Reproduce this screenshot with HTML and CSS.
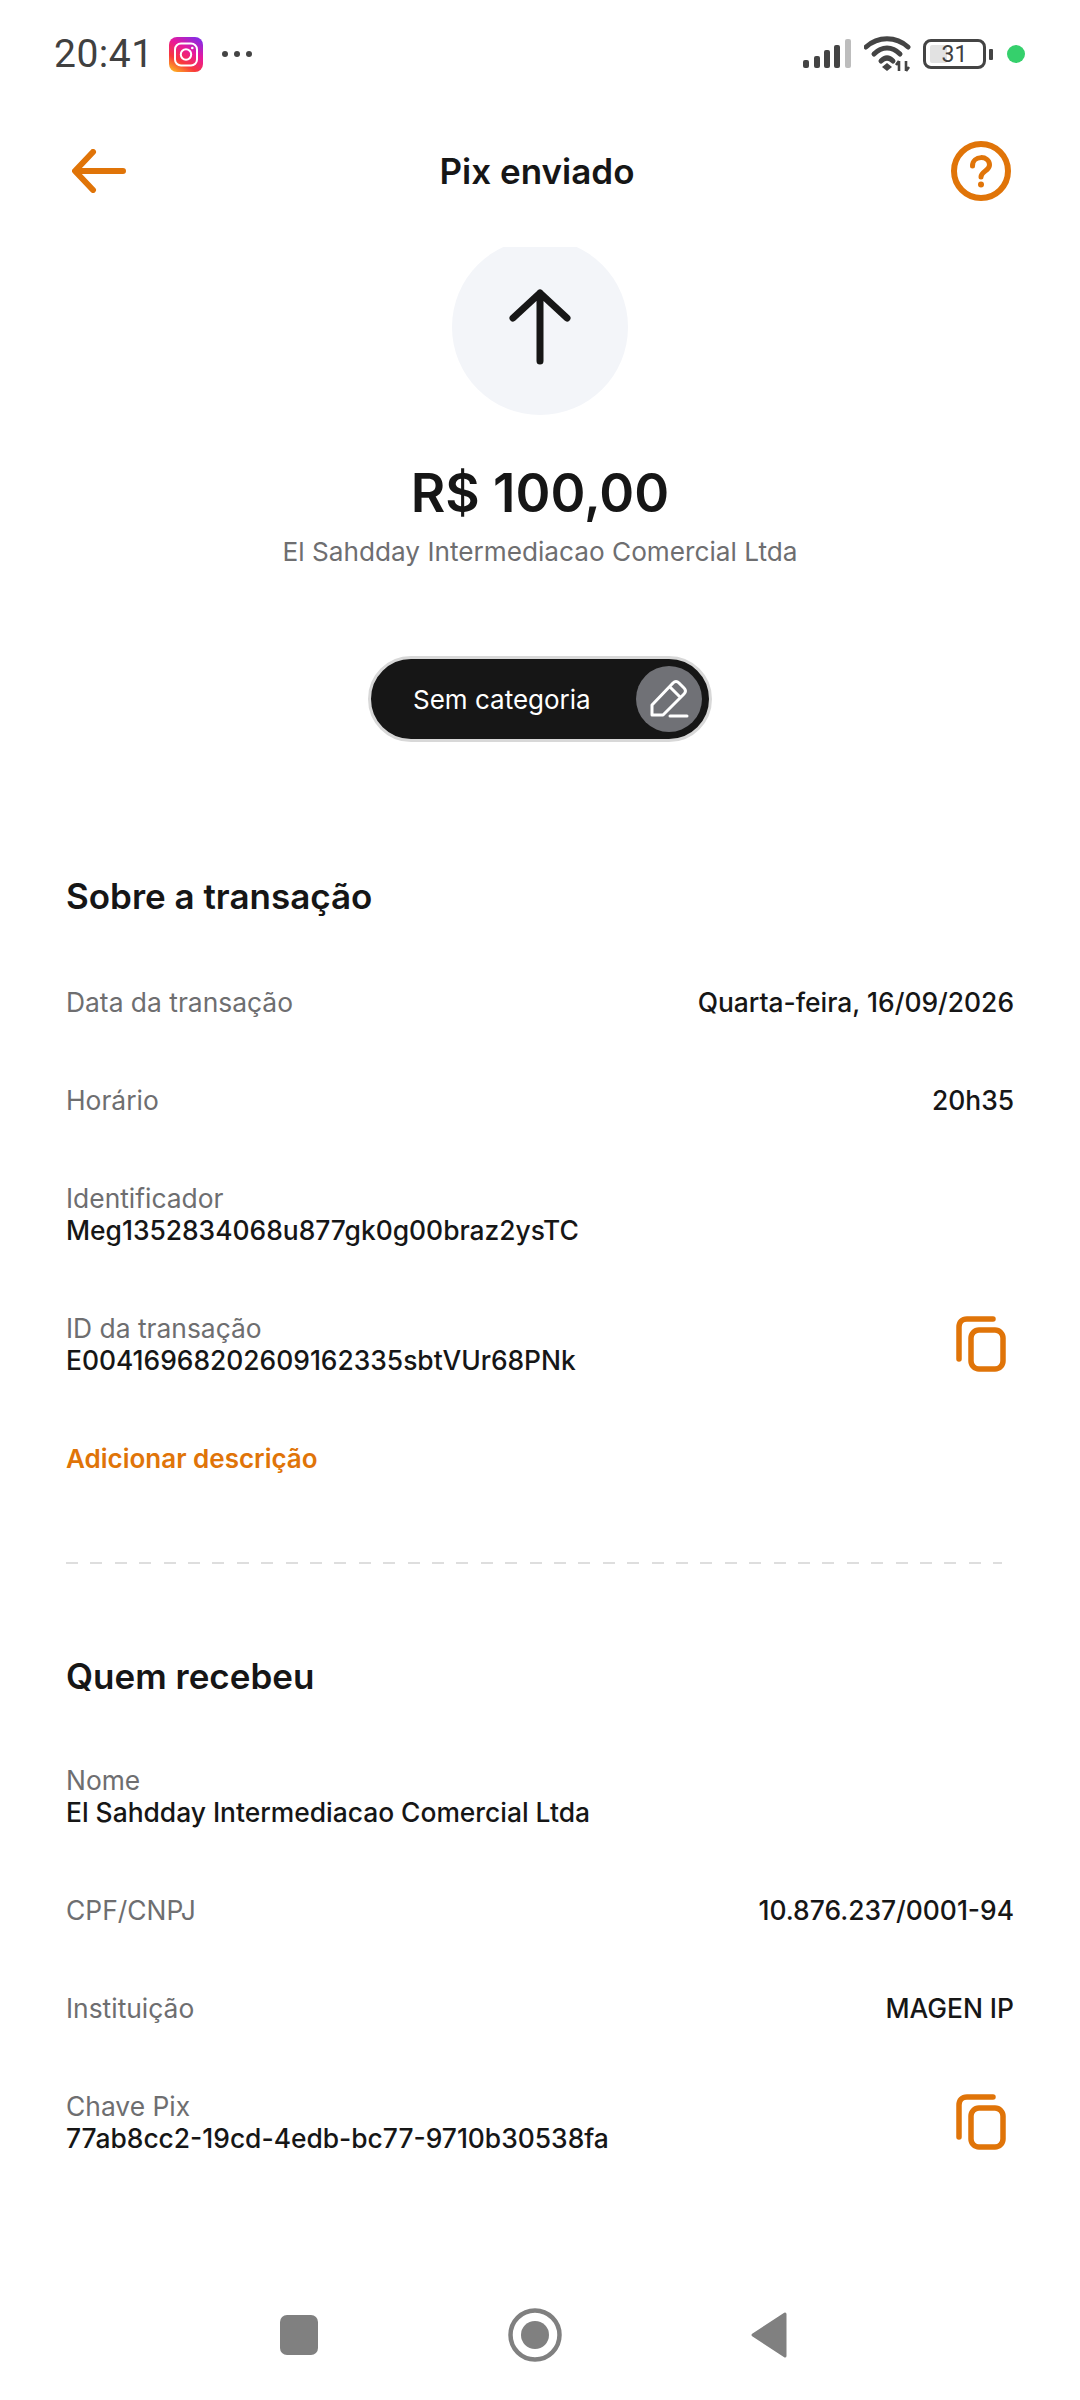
FILE: index.html
```html
<!DOCTYPE html>
<html lang="pt-BR">
<head>
  <meta charset="UTF-8" />
  <title>Pix enviado</title>
  <link rel="stylesheet" href="styles.css">
</head>
<body>
<div class="screen">

  <div class="status-bar">
    <span class="clock">20:41</span>
    <svg class="ig-icon" width="34" height="35" viewBox="0 0 34 35">
      <defs>
        <linearGradient id="igGrad" x1="0.15" y1="1" x2="0.75" y2="0">
          <stop offset="0" stop-color="#fdb022" />
          <stop offset="0.3" stop-color="#f8383c" />
          <stop offset="0.65" stop-color="#e8189c" />
          <stop offset="1" stop-color="#8a2be2" />
        </linearGradient>
      </defs>
      <rect width="34" height="35" rx="8" fill="url(#igGrad)" />
      <rect x="6" y="6.5" width="22" height="22" rx="6" fill="none" stroke="#fff" stroke-width="2" />
      <circle cx="17" cy="17.5" r="5.2" fill="none" stroke="#fff" stroke-width="2" />
      <circle cx="23.3" cy="11" r="1.3" fill="#fff" />
    </svg>
    <span class="more-dots"><i></i><i></i><i></i></span>
    <span class="status-right">
      <svg width="48" height="30" viewBox="0 0 48 30">
        <rect x="0" y="21" width="6" height="8" rx="2" fill="#444" />
        <rect x="11" y="17" width="6" height="12" rx="2" fill="#444" />
        <rect x="21" y="11" width="6" height="18" rx="2" fill="#444" />
        <rect x="31" y="6" width="6" height="23" rx="2" fill="#444" />
        <rect x="42" y="0" width="6" height="29" rx="2" fill="#bdbdbd" />
      </svg>
      <svg width="48" height="36" viewBox="0 0 48 36">
        <path d="M2 11 C14 0 32 0 44 11" fill="none" stroke="#444" stroke-width="5" stroke-linecap="round" />
        <path d="M10 18 C18 10 28 10 36 18" fill="none" stroke="#444" stroke-width="5" stroke-linecap="round" />
        <path d="M17 25 C21 21 25 21 29 25" fill="none" stroke="#444" stroke-width="5" stroke-linecap="round" />
        <path d="M18 31 L23 27 L28 31 L23 35 Z" fill="#444" />
        <path d="M35 25 V35 M35 25 L32 29 M42 35 V25 M42 35 L45 31" fill="none" stroke="#444" stroke-width="2.6" />
      </svg>
      <span class="battery">
        <span class="battery-fill"></span>
        <span class="battery-level">31</span>
      </span>
      <span class="battery-cap"></span>
      <span class="green-dot"></span>
    </span>
  </div>

  <header class="top-bar">
    <svg class="back-icon" width="54" height="44" viewBox="0 0 54 44">
      <path d="M51 22 H4 M21 3 L3 22 L21 41" fill="none" stroke="#e07408" stroke-width="6" stroke-linecap="round" stroke-linejoin="round" />
    </svg>
    <h1>Pix enviado</h1>
    <svg class="help-icon" width="62" height="62" viewBox="0 0 62 62">
      <circle cx="31" cy="31" r="27" fill="none" stroke="#e07408" stroke-width="6" />
      <path d="M22.5 26 C22.5 15 39.5 15 39.5 25 C39.5 31 31 31 31 37" fill="none" stroke="#e07408" stroke-width="5" stroke-linecap="round" />
      <circle cx="31" cy="44.5" r="3" fill="#e07408" />
    </svg>
  </header>

  <section class="summary">
    <div class="circle-clip">
      <div class="circle">
        <svg width="62" height="76" viewBox="0 0 62 76">
          <path d="M31 72 V4 M4 29 L31 4 L58 29" fill="none" stroke="#161616" stroke-width="7" stroke-linecap="round" stroke-linejoin="round" />
        </svg>
      </div>
    </div>
    <div class="amount">R$ 100,00</div>
    <div class="payee">El Sahdday Intermediacao Comercial Ltda</div>
    <div class="category-pill">
      <span>Sem categoria</span>
      <span class="edit-btn">
        <svg width="40" height="40" viewBox="0 0 40 40">
          <path d="M3 36 V26 L24 4 C26 2 28 2 30 4 L35 9 C37 11 37 13 35 15 L14 36 Z M21 8 L31 18" fill="none" stroke="#fff" stroke-width="3" stroke-linejoin="round" />
          <path d="M21 37 H38" fill="none" stroke="#fff" stroke-width="3" stroke-linecap="round" />
        </svg>
      </span>
    </div>
  </section>

  <section class="details">
    <h2>Sobre a transação</h2>
    <div class="rows">
      <div class="row">
        <span class="label">Data da transação</span>
        <span class="value">Quarta-feira, 16/09/2026</span>
      </div>
      <div class="row">
        <span class="label">Horário</span>
        <span class="value">20h35</span>
      </div>
      <div class="row">
        <div class="stack">
          <span class="label">Identificador</span>
          <span class="value">Meg1352834068u877gk0g00braz2ysTC</span>
        </div>
      </div>
      <div class="row">
        <div class="stack">
          <span class="label">ID da transação</span>
          <span class="value">E00416968202609162335sbtVUr68PNk</span>
        </div>
        <svg class="copy-icon" width="50" height="56" viewBox="0 0 50 56">
          <path d="M3 43 V11 C3 6 6 3 11 3 H37" fill="none" stroke="#e07408" stroke-width="5.5" stroke-linecap="round" />
          <rect x="15" y="14" width="32" height="39" rx="8" fill="none" stroke="#e07408" stroke-width="5.5" />
        </svg>
      </div>
      <div class="row add-row">
        <span class="add-link">Adicionar descrição</span>
      </div>
    </div>
  </section>

  <div class="dashed"></div>

  <section class="details receiver">
    <h2>Quem recebeu</h2>
    <div class="rows">
      <div class="row">
        <div class="stack">
          <span class="label">Nome</span>
          <span class="value">El Sahdday Intermediacao Comercial Ltda</span>
        </div>
      </div>
      <div class="row">
        <span class="label">CPF/CNPJ</span>
        <span class="value">10.876.237/0001-94</span>
      </div>
      <div class="row">
        <span class="label">Instituição</span>
        <span class="value">MAGEN IP</span>
      </div>
      <div class="row">
        <div class="stack">
          <span class="label">Chave Pix</span>
          <span class="value">77ab8cc2-19cd-4edb-bc77-9710b30538fa</span>
        </div>
        <svg class="copy-icon" width="50" height="56" viewBox="0 0 50 56">
          <path d="M3 43 V11 C3 6 6 3 11 3 H37" fill="none" stroke="#e07408" stroke-width="5.5" stroke-linecap="round" />
          <rect x="15" y="14" width="32" height="39" rx="8" fill="none" stroke="#e07408" stroke-width="5.5" />
        </svg>
      </div>
    </div>
  </section>

  <nav class="nav-bar">
    <span class="nav-square"></span>
    <svg width="54" height="54" viewBox="0 0 54 54">
      <circle cx="27" cy="27" r="24.5" fill="none" stroke="#808080" stroke-width="4.5" />
      <circle cx="27" cy="27" r="14" fill="#808080" />
    </svg>
    <svg width="36" height="46" viewBox="0 0 36 46">
      <path d="M34 2 V44 L2 23 Z" fill="#808080" stroke="#808080" stroke-width="3" stroke-linejoin="round" />
    </svg>
  </nav>

</div>
</body>
</html>
```

FILE: styles.css
```css
* {
  box-sizing: border-box;
}
body {
  margin: 0;
  background: #ffffff;
  font-family: 'Inter', sans-serif;
  color: #161616;
}
.screen {
  width: 1080px;
  height: 2400px;
  display: flex;
  flex-direction: column;
  overflow: hidden;
}

/* status bar */
.status-bar {
  height: 106px;
  padding: 2px 0 0 54px;
  display: flex;
  align-items: center;
}
.clock {
  font-family: 'Roboto', sans-serif;
  font-size: 39px;
  color: #404040;
  letter-spacing: 0.5px;
}
.ig-icon {
  margin-left: 15px;
}
.more-dots {
  margin-left: 19px;
  display: flex;
  gap: 6px;
}
.more-dots i {
  width: 6px;
  height: 6px;
  border-radius: 50%;
  background: #444;
}
.status-right {
  margin-left: auto;
  margin-right: 55px;
  display: flex;
  align-items: center;
}
.status-right svg + svg {
  margin-left: 13px;
}
.battery {
  margin-left: 11px;
  width: 63px;
  height: 30px;
  border: 3px solid #444;
  border-radius: 8px;
  display: flex;
  align-items: center;
  justify-content: center;
  position: relative;
}
.battery-fill {
  position: absolute;
  left: 4px;
  top: 3px;
  bottom: 3px;
  width: 17px;
  background: #e2e2e2;
  border-radius: 2px;
}
.battery-level {
  position: relative;
  font-family: 'Roboto', sans-serif;
  font-size: 23px;
  color: #404040;
}
.battery-cap {
  margin-left: 3px;
  width: 4px;
  height: 11px;
  background: #444;
  border-radius: 1px;
}
.green-dot {
  margin-left: 14px;
  width: 18px;
  height: 18px;
  border-radius: 50%;
  background: #35d06c;
}

/* top bar */
.top-bar {
  height: 130px;
  padding: 0 68px 0 72px;
  display: flex;
  align-items: center;
  justify-content: space-between;
  flex: none;
}
.top-bar h1 {
  margin: 0 2px 0 0;
  font-size: 35px;
  font-weight: 600;
}

/* summary */
.summary {
  margin-top: 11px;
  display: flex;
  flex-direction: column;
  align-items: center;
}
.circle-clip {
  height: 168px;
  width: 176px;
  overflow: hidden;
}
.circle {
  width: 176px;
  height: 176px;
  margin-top: -8px;
  border-radius: 50%;
  background: #f3f5f9;
  display: flex;
  align-items: center;
  justify-content: center;
}
.amount {
  margin-top: 46px;
  font-size: 53px;
  line-height: 64px;
  font-weight: 600;
}
.payee {
  margin-top: 11px;
  font-size: 26.2px;
  line-height: 32px;
  color: #6e6e70;
}
.category-pill {
  margin-top: 88px;
  width: 344px;
  height: 86px;
  padding: 0 7px 0 42px;
  border: 3px solid #d8d8d8;
  border-radius: 43px;
  background: #161616;
  color: #ffffff;
  font-size: 26px;
  display: flex;
  align-items: center;
  justify-content: space-between;
}
.edit-btn {
  width: 66px;
  height: 66px;
  border-radius: 50%;
  background: #707176;
  display: flex;
  align-items: center;
  justify-content: center;
}

/* detail rows */
.details {
  padding: 0 66px;
  margin-top: 136px;
}
.details.receiver {
  margin-top: 94px;
}
.details h2 {
  margin: 0 0 72px;
  font-size: 35px;
  line-height: 36px;
  font-weight: 600;
}
.details.receiver h2 {
  margin-bottom: 70px;
}
.rows {
  display: flex;
  flex-direction: column;
  gap: 66px;
}
.row {
  display: flex;
  align-items: center;
  justify-content: space-between;
  min-height: 32px;
  font-size: 26.4px;
  line-height: 32px;
}
.add-row {
  margin-top: 1px;
}
.stack {
  display: flex;
  flex-direction: column;
}
.label {
  color: #6e6e70;
}
.value {
  font-weight: 500;
  color: #161616;
}
.add-link {
  font-size: 26px;
  font-weight: 600;
  color: #e07408;
}
.copy-icon {
  margin: -12px 8px -12px 0;
}
.dashed {
  margin: 87px 0 0 66px;
  width: 936px;
  height: 2px;
  flex: none;
  background: repeating-linear-gradient(to right, #dedede 0 12px, transparent 12px 24.4px);
}

/* android nav */
.nav-bar {
  margin-top: auto;
  height: 130px;
  flex: none;
  padding: 0 0 0 280px;
  display: flex;
  align-items: center;
}
.nav-square {
  width: 38px;
  height: 40px;
  border-radius: 7px;
  background: #808080;
}
.nav-bar svg:nth-child(2) {
  margin-left: 190px;
}
.nav-bar svg:nth-child(3) {
  margin-left: 189px;
}
```
